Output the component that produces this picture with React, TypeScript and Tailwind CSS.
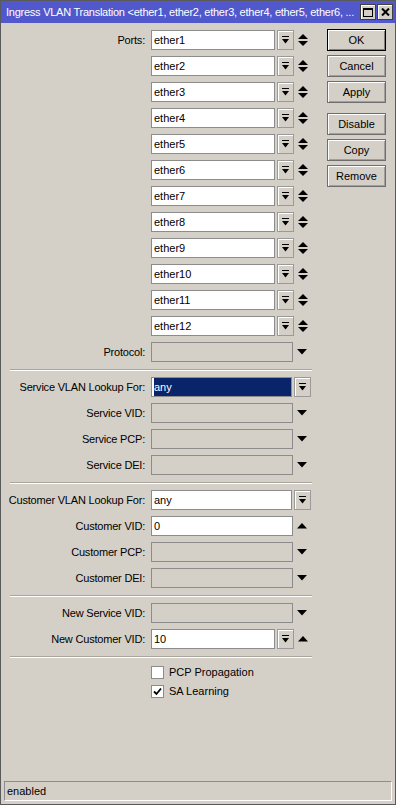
import { FC, ReactNode } from 'react';

const font = "font-['Liberation_Sans',Arial,sans-serif]";

const DropIcon = () => (
  <svg width="7" height="8" viewBox="0 0 7 8">
    <rect x="0" y="0" width="7" height="1" fill="#000" />
    <polygon points="0,3 7,3 3.5,7.5" fill="#000" />
  </svg>
);

const UpDown = () => (
  <svg width="10" height="12" viewBox="0 0 10 12">
    <polygon points="5,0 10,5 0,5" fill="#000" />
    <polygon points="0,7 10,7 5,12" fill="#000" />
  </svg>
);

const Down = () => (
  <svg width="10" height="6" viewBox="0 0 10 6">
    <polygon points="0,0 10,0 5,5.5" fill="#000" />
  </svg>
);

const Up = () => (
  <svg width="10" height="6" viewBox="0 0 10 6">
    <polygon points="5,0 10,5.5 0,5.5" fill="#000" />
  </svg>
);

const DropBtn = () => (
  <div className="ml-[2px] flex h-[20px] w-[17px] items-center justify-center border border-[#9a9a9a] bg-[#d4d0c8] shadow-[inset_1px_1px_0_#fff]">
    <DropIcon />
  </div>
);

const Field: FC<{ value?: string; w: string; disabled?: boolean; selected?: boolean }> = ({
  value,
  w,
  disabled,
  selected,
}) => (
  <div
    className={`flex h-[20px] items-center border border-[#8c8c8c] pl-[2px] ${w} ${
      disabled ? 'bg-[#d4d0c8]' : 'bg-white'
    }`}
  >
    {value && (
      <span className={selected ? 'flex h-full w-full items-center bg-[#0a246a] text-white' : 'text-black'}>
        {value}
      </span>
    )}
  </div>
);

const Row: FC<{ label?: string; children: ReactNode }> = ({ label, children }) => (
  <div className="flex h-[26px] items-center">
    <div className="w-[150px] pr-[6px] text-right tracking-[-0.2px] text-black">{label}</div>
    {children}
  </div>
);

const Side: FC<{ children?: ReactNode }> = ({ children }) => (
  <div className="flex w-[18px] items-center justify-center">{children}</div>
);

const Separator = () => (
  <div className="flex h-[9px] items-center">
    <div className="ml-[9px] w-[302px] border-t border-b border-t-[#a8a59e] border-b-white" />
  </div>
);

const Button: FC<{ label: string; def?: boolean }> = ({ label, def }) => (
  <div
    className={`flex h-[22px] w-[59px] items-center justify-center bg-[#d4d0c8] text-black ${
      def
        ? 'border border-black shadow-[inset_1px_1px_0_#fff,inset_-1px_-1px_0_#808080]'
        : 'border border-[#6e6e6e] shadow-[inset_1px_1px_0_#fff,inset_-1px_-1px_0_#a0a0a0]'
    }`}
  >
    {label}
  </div>
);

const Check: FC<{ label: string; checked?: boolean }> = ({ label, checked }) => (
  <div className="flex h-[19px] items-center pl-[150px]">
    <div className="flex h-[13px] w-[13px] items-center justify-center border border-[#8c8c8c] bg-white">
      {checked && (
        <svg width="9" height="9" viewBox="0 0 9 9">
          <polyline points="1,4.5 3.5,7 8,1.5" fill="none" stroke="#000" strokeWidth="1.8" />
        </svg>
      )}
    </div>
    <span className="ml-[5px] text-black">{label}</span>
  </div>
);

const ports = Array.from({ length: 12 }, (_, i) => `ether${i + 1}`);

export default function App() {
  return (
    <div className={`flex h-[805px] w-[396px] flex-col border border-[#5a5a5a] bg-[#d4d0c8] text-[11px] ${font}`}>
      <div className="flex h-[22px] items-center bg-[#5058cc] pl-[5px] pr-[2px]">
        <span className="flex-1 overflow-hidden whitespace-nowrap text-[11px] tracking-[-0.25px] text-white">
          Ingress VLAN Translation &lt;ether1, ether2, ether3, ether4, ether5, ether6, ...
        </span>
        <div className="flex gap-[1px]">
          <div className="flex h-[16px] w-[16px] items-center justify-center border border-[#404040] bg-[#d4d0c8] shadow-[inset_1px_1px_0_#fff]">
            <div className="h-[9px] w-[10px] border border-t-2 border-black" />
          </div>
          <div className="flex h-[16px] w-[16px] items-center justify-center border border-[#404040] bg-[#d4d0c8] shadow-[inset_1px_1px_0_#fff]">
            <svg width="9" height="8" viewBox="0 0 9 8">
              <path d="M1 0.5 L8 7.5 M8 0.5 L1 7.5" stroke="#000" strokeWidth="2" />
            </svg>
          </div>
        </div>
      </div>

      <div className="flex flex-1 pt-[4px]">
        <div className="w-[326px]">
          {ports.map((p, i) => (
            <Row key={p} label={i === 0 ? 'Ports:' : ''}>
              <Field value={p} w="w-[124px]" />
              <DropBtn />
              <Side>
                <UpDown />
              </Side>
            </Row>
          ))}
          <Row label="Protocol:">
            <Field w="w-[142px]" disabled />
            <Side>
              <Down />
            </Side>
          </Row>
          <Separator />
          <Row label="Service VLAN Lookup For:">
            <Field value="any" w="w-[141px]" selected />
            <DropBtn />
          </Row>
          <Row label="Service VID:">
            <Field w="w-[142px]" disabled />
            <Side>
              <Down />
            </Side>
          </Row>
          <Row label="Service PCP:">
            <Field w="w-[142px]" disabled />
            <Side>
              <Down />
            </Side>
          </Row>
          <Row label="Service DEI:">
            <Field w="w-[142px]" disabled />
            <Side>
              <Down />
            </Side>
          </Row>
          <Separator />
          <Row label="Customer VLAN Lookup For:">
            <Field value="any" w="w-[141px]" />
            <DropBtn />
          </Row>
          <Row label="Customer VID:">
            <Field value="0" w="w-[142px]" />
            <Side>
              <Up />
            </Side>
          </Row>
          <Row label="Customer PCP:">
            <Field w="w-[142px]" disabled />
            <Side>
              <Down />
            </Side>
          </Row>
          <Row label="Customer DEI:">
            <Field w="w-[142px]" disabled />
            <Side>
              <Down />
            </Side>
          </Row>
          <Separator />
          <Row label="New Service VID:">
            <Field w="w-[142px]" disabled />
            <Side>
              <Down />
            </Side>
          </Row>
          <Row label="New Customer VID:">
            <Field value="10" w="w-[124px]" />
            <DropBtn />
            <Side>
              <Up />
            </Side>
          </Row>
          <Separator />
          <div className="pt-[2px]">
            <Check label="PCP Propagation" />
            <Check label="SA Learning" checked />
          </div>
        </div>
        <div className="flex flex-col gap-[4px] pt-[2px]">
          <Button label="OK" def />
          <Button label="Cancel" />
          <Button label="Apply" />
          <div className="h-[2px]" />
          <Button label="Disable" />
          <Button label="Copy" />
          <Button label="Remove" />
        </div>
      </div>

      <div className="mx-[3px] mb-[3px] flex h-[20px] items-center border border-[#8c8c8c] border-b-white border-r-white bg-[#d4d0c8] pl-[2px] text-black">
        enabled
      </div>
    </div>
  );
}
